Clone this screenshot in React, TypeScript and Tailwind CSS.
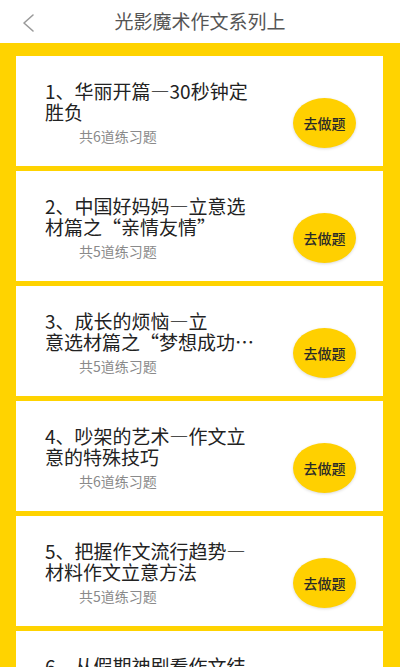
import React from 'react';

interface Lesson {
  lines: string[];
  count: number;
}

const lessons: Lesson[] = [
  { lines: ['1、华丽开篇—30秒钟定', '胜负'], count: 6 },
  { lines: ['2、中国好妈妈—立意选', '材篇之“亲情友情”'], count: 5 },
  { lines: ['3、成长的烦恼—立', '意选材篇之“梦想成功…'], count: 5 },
  { lines: ['4、吵架的艺术—作文立', '意的特殊技巧'], count: 6 },
  { lines: ['5、把握作文流行趋势—', '材料作文立意方法'], count: 5 },
  { lines: ['6、从假期神剧看作文结', '构'], count: 5 },
];

// 破折号按全角宽度显示
const renderLine = (line: string) =>
  line.split('—').map((part, i) => (
    <React.Fragment key={i}>
      {i > 0 && <span className="[font-feature-settings:'fwid']">—</span>}
      {part}
    </React.Fragment>
  ));

const LessonCard: React.FC<{ lesson: Lesson }> = ({ lesson }) => (
  <div className="flex h-[110px] shrink-0 bg-white">
    <div className="flex-1 pl-[29px] pt-[24px]">
      {/* 标题 */}
      <div className="text-[19px] leading-[21px] text-[#222]">
        {lesson.lines.map((l) => (
          <div key={l} className="whitespace-nowrap">{renderLine(l)}</div>
        ))}
      </div>
      <p className="mt-[4px] pl-[34px] text-[14px] leading-[20px] text-[#8a8a8a]">
        共{lesson.count}道练习题
      </p>
    </div>
    <button className="mr-[27px] mt-[42px] flex h-[50px] w-[63px] items-center justify-center rounded-[50%] bg-[#FFD000] text-[14px] font-medium text-[#2a2a2a] shadow-[0_1px_3px_rgba(0,0,0,0.15)]">
      去做题
    </button>
  </div>
);

export default function App() {
  return (
    <div
      className="flex h-[667px] w-[400px] flex-col overflow-hidden bg-white"
      style={{ fontFamily: '"Noto Sans CJK SC", "Noto Sans", sans-serif' }}
    >
      {/* 顶部栏 */}
      <header className="relative flex h-[43px] shrink-0 items-center justify-center bg-white">
        <svg
          className="absolute left-[21px] top-[13px]"
          width="14"
          height="20"
          viewBox="0 0 14 20"
          fill="none"
        >
          <path d="M12 2 L3 10 L12 18" stroke="#9a9a9a" strokeWidth="1.6" strokeLinecap="round" strokeLinejoin="round" />
        </svg>
        <h1 className="text-[19px] text-[#555]">光影魔术作文系列上</h1>
      </header>

      {/* 列表 */}
      <main className="flex flex-1 flex-col gap-[5px] overflow-hidden bg-[#FFD300] pl-[16px] pr-[17px] pt-[13px]">
        {lessons.map((lesson, i) => (
          <LessonCard key={i} lesson={lesson} />
        ))}
      </main>
    </div>
  );
}
